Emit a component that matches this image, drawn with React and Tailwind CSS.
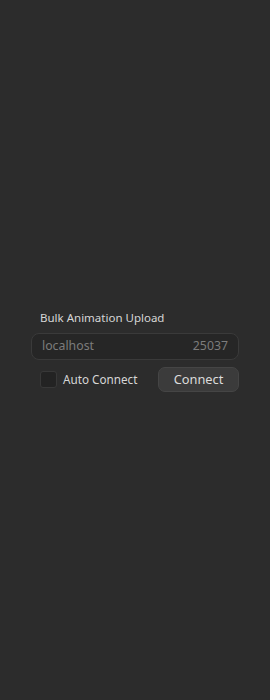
import React, { useState } from "react";

export default function App() {
  const [auto, setAuto] = useState(false);

  return (
    <div
      className="flex h-[700px] w-[270px] flex-col bg-[#2c2c2c] text-[#d4d4d4]"
      style={{ fontFamily: "'Noto Sans', Inter, sans-serif" }}
    >
      <div className="mt-[309px] flex flex-col px-[31px]">
        <div className="pl-[9px] text-[11.5px] leading-[18px] text-[#d6d6d6]">Bulk Animation Upload</div>
        <div className="mt-[6px] flex h-[27px] w-[208px] items-center justify-between rounded-[8px] border border-[#3a3a3a] bg-[#262626] px-[10px] text-[12.3px] text-[#7c7c7c]">
          <span>localhost</span>
          <span>25037</span>
        </div>
        <div className="mt-[7px] flex w-[208px] items-center justify-between">
          <label className="flex items-center gap-[6px] pl-[9px]">
            <button
              type="button"
              onClick={() => setAuto(!auto)}
              className="h-[17px] w-[17px] rounded-[3px] border border-[#383838] bg-[#232323]"
            />
            <span className="text-[11.7px] text-[#d6d6d6]">Auto Connect</span>
          </label>
          <button
            type="button"
            className="h-[25px] w-[81px] rounded-[7px] border border-[#454545] bg-[#3b3b3b] text-[12.8px] text-[#dcdcdc]"
          >
            Connect
          </button>
        </div>
      </div>
    </div>
  );
}
